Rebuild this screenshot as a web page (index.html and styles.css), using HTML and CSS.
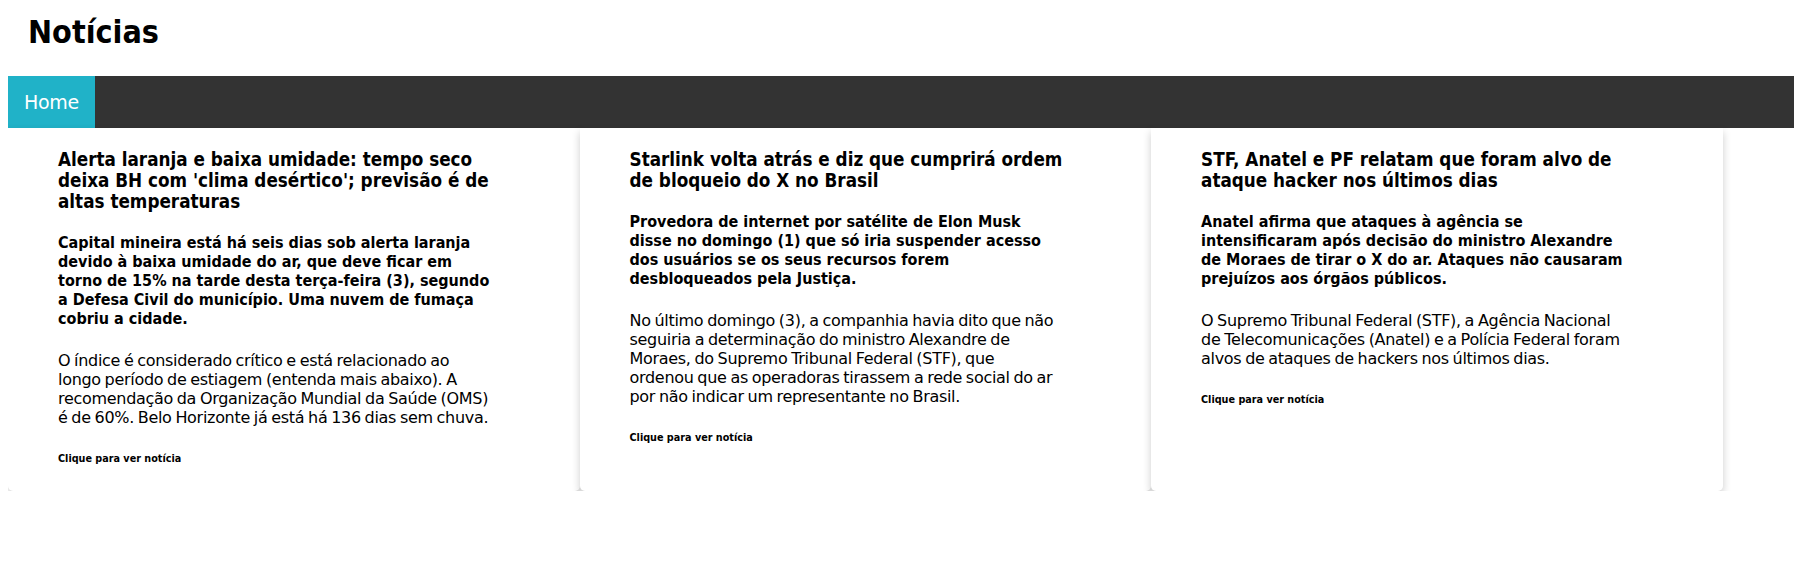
FILE: index.html
```html
<!DOCTYPE html>
<html lang="pt-BR">
<head>
<meta charset="utf-8">
<title>Notícias</title>
<link rel="stylesheet" href="styles.css">
</head>
<body>
<header class="site-header">
  <h1 class="site-title">Notícias</h1>
</header>
<nav class="topnav">
  <a class="topnav-link active" href="#">Home</a>
</nav>
<main class="cards">
  <article class="card">
    <h3 class="card-title">Alerta laranja e baixa umidade: tempo seco deixa BH com 'clima desértico'; previsão é de altas temperaturas</h3>
    <h4 class="card-lede">Capital mineira está há seis dias sob alerta laranja devido à baixa umidade do ar, que deve ficar em torno de 15% na tarde desta terça-feira (3), segundo a Defesa Civil do município. Uma nuvem de fumaça cobriu a cidade.</h4>
    <p class="card-text">O índice é considerado crítico e está relacionado ao longo período de estiagem (entenda mais abaixo). A recomendação da Organização Mundial da Saúde (OMS) é de 60%. Belo Horizonte já está há 136 dias sem chuva.</p>
    <h6 class="card-link">Clique para ver notícia</h6>
  </article>
  <article class="card">
    <h3 class="card-title">Starlink volta atrás e diz que cumprirá ordem de bloqueio do X no Brasil</h3>
    <h4 class="card-lede">Provedora de internet por satélite de Elon Musk disse no domingo (1) que só iria suspender acesso dos usuários se os seus recursos forem desbloqueados pela Justiça.</h4>
    <p class="card-text">No último domingo (3), a companhia havia dito que não seguiria a determinação do ministro Alexandre de Moraes, do Supremo Tribunal Federal (STF), que ordenou que as operadoras tirassem a rede social do ar por não indicar um representante no Brasil.</p>
    <h6 class="card-link">Clique para ver notícia</h6>
  </article>
  <article class="card">
    <h3 class="card-title">STF, Anatel e PF relatam que foram alvo de ataque hacker nos últimos dias</h3>
    <h4 class="card-lede">Anatel afirma que ataques à agência se intensificaram após decisão do ministro Alexandre de Moraes de tirar o X do ar. Ataques não causaram prejuízos aos órgãos públicos.</h4>
    <p class="card-text">O Supremo Tribunal Federal (STF), a Agência Nacional de Telecomunicações (Anatel) e a Polícia Federal foram alvos de ataques de hackers nos últimos dias.</p>
    <h6 class="card-link">Clique para ver notícia</h6>
  </article>
</main>
</body>
</html>
```
FILE: styles.css
```css
body {
  margin: 8px;
  font-family: "DejaVu Sans", sans-serif;
  color: #000;
  background: #fff;
}

.site-header {
  padding: 5px 20px 25px;
}

.site-title {
  margin: 0;
  font-family: "DejaVu Sans Condensed", "DejaVu Sans", sans-serif;
  font-size: 32px;
  font-weight: bold;
}

.topnav {
  display: flex;
  background: #333333;
  margin-right: -8px;
}

.topnav-link {
  display: block;
  padding: 15px 16px;
  font-size: 19px;
  letter-spacing: -0.3px;
  color: #fff;
  text-decoration: none;
}

.topnav-link.active {
  background: #20b2c8;
}

.cards {
  display: flex;
  align-items: stretch;
}

.card {
  width: 32%;
  box-sizing: border-box;
  padding: 2px 87.5px 1px 50px;
  background: #fff;
  border-radius: 0 0 5px 5px;
  box-shadow: 0 4px 8px 0 rgba(0, 0, 0, 0.2);
}

.card-title,
.card-lede,
.card-link {
  font-family: "DejaVu Sans Condensed", "DejaVu Sans", sans-serif;
  font-weight: bold;
}

.card-title {
  font-size: 18.72px;
  margin: 18.72px 0;
}

.card-lede {
  font-size: 16px;
  margin: 21.28px 0;
}

.card-text {
  font-size: 16px;
  letter-spacing: -0.3px;
  word-spacing: -1px;
  margin: 23.3px 2.6px 16px 0;
}

.card-link {
  font-size: 10.72px;
  margin: 25px 0;
}
```
